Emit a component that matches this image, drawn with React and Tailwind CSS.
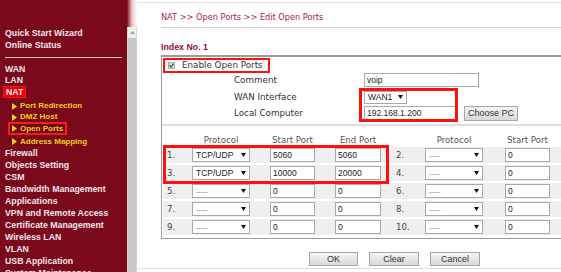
import React from "react";

const Tri = () => (
  <svg width="5" height="7" viewBox="0 0 5 7" className="shrink-0">
    <polygon points="0,0 5,3.5 0,7" fill="#f2cf1a" />
  </svg>
);

function Sidebar() {
  const main = "shrink-0 whitespace-nowrap pl-[5px] flex items-center text-[#f1e4ee] font-bold text-[8.75px]";
  const sub = "shrink-0 whitespace-nowrap pl-[12px] flex items-center gap-[3px] text-[#f2cf1a] font-bold text-[8px]";
  return (
    <div className="w-[137px] shrink-0 flex h-full overflow-hidden" style={{ fontFamily: '"Liberation Sans", Arial, sans-serif' }}>
      <div className="w-[127px] bg-[#7a0a1b] flex flex-col pt-[27px] leading-none overflow-hidden">
        <div className={main + " h-[12px]"}>Quick Start Wizard</div>
        <div className={main + " h-[12px]"}>Online Status</div>
        <div className="shrink-0 mx-[5px] mt-[6px] h-[1px] bg-[#dcc2cc]" />
        <div className="shrink-0 h-[5px]" />
        <div className={main + " h-[12px]"}>WAN</div>
        <div className={main + " h-[11px]"}>LAN</div>
        <div className="shrink-0 pl-[3px] h-[12px] flex">
          <div className="h-[12px] px-[2px] bg-[#e80000] border border-[#ff1010] flex items-center text-[#f7eef3] font-bold text-[8.75px]">NAT</div>
        </div>
        <div className={sub + " h-[14px] pt-[2px]"}><Tri />Port Redirection</div>
        <div className={sub + " h-[10px]"}><Tri />DMZ Host</div>
        <div className="shrink-0 pl-[8px] h-[13px] flex">
          <div className="whitespace-nowrap h-[13px] border-2 border-[#ff1a1a] bg-[#6e0716] flex items-center gap-[3px] pl-[2px] pr-[2px] text-[#f2cf1a] font-bold text-[8px]"><Tri />Open Ports</div>
        </div>
        <div className={sub + " h-[13px]"}><Tri />Address Mapping</div>
        <div className={main + " h-[11px]"}>Firewall</div>
        <div className={main + " h-[12px]"}>Objects Setting</div>
        <div className={main + " h-[12px]"}>CSM</div>
        <div className={main + " h-[12px]"}>Bandwidth Management</div>
        <div className={main + " h-[12px]"}>Applications</div>
        <div className={main + " h-[12px]"}>VPN and Remote Access</div>
        <div className={main + " h-[12px]"}>Certificate Management</div>
        <div className={main + " h-[12px]"}>Wireless LAN</div>
        <div className={main + " h-[12px]"}>VLAN</div>
        <div className={main + " h-[12px]"}>USB Application</div>
        <div className={main + " h-[12px]"}>System Maintenance</div>
      </div>
      <div className="w-[10px] flex flex-col">
        <div className="shrink-0 h-[27px] bg-gradient-to-r from-[#7a0a1b] via-[#e9c4cc] to-white" />
        <div className="shrink-0 h-[11px] bg-[#efefef] border-x border-[#d8d8d8] flex items-center justify-center">
          <svg width="5" height="3" viewBox="0 0 5 3"><polygon points="0,3 2.5,0 5,3" fill="#a0a0a0" /></svg>
        </div>
        <div className="flex-1 bg-[#c6c6c6] border-x border-[#d4d4d4]" />
      </div>
    </div>
  );
}

const lbl = { fontFamily: '"DejaVu Sans", Verdana, sans-serif' };
const inp = { fontFamily: '"Liberation Sans", Arial, sans-serif' };

function Input({ w, v, h = "h-[14px]" }) {
  return (
    <div className={`${w} ${h} bg-white border border-[#a9a9a9] flex items-center pl-[2px] text-[8.5px] text-[#222] leading-none`} style={inp}>
      {v}
    </div>
  );
}

function Select({ w, v, h = "h-[14px]" }) {
  const dash = v === "-----";
  return (
    <div className={`${w} ${h} bg-white border border-[#a9a9a9] flex items-center justify-between pl-[3px] pr-[3px] text-[8.5px] leading-none`} style={inp}>
      <span className={dash ? "text-[#777] text-[7px]" : "text-[#222]"}>{v}</span>
      <svg width="5" height="4" viewBox="0 0 5 4"><polygon points="0,0 5,0 2.5,4" fill="#111" /></svg>
    </div>
  );
}

function Btn({ children, w, h = "h-[14px]" }) {
  return (
    <div className={`${w} ${h} border border-[#a6a6a6] bg-gradient-to-b from-[#f4f4f4] to-[#d9d9d9] flex items-center justify-center text-[9px] text-[#333] leading-none`} style={inp}>
      {children}
    </div>
  );
}

const rows = [
  ["1.", "TCP/UDP", "5060", "5060", "2.", "-----", "0"],
  ["3.", "TCP/UDP", "10000", "20000", "4.", "-----", "0"],
  ["5.", "-----", "0", "0", "6.", "-----", "0"],
  ["7.", "-----", "0", "0", "8.", "-----", "0"],
  ["9.", "-----", "0", "0", "10.", "-----", "0"],
];

function Main() {
  return (
    <div className="flex-1 flex flex-col pl-[24px]">
      <div className="shrink-0 mt-[2px] h-[1px] bg-[#e2e2e2] -ml-[24px]" />
      <div className="shrink-0 h-[24px] flex items-center pt-[4px] text-[8.2px] text-[#a3234e] leading-none" style={lbl}>
        NAT &gt;&gt; Open Ports &gt;&gt; Edit Open Ports
      </div>
      <div className="shrink-0 h-[1px] bg-[#cfcfcf]" />
      <div className="shrink-0 h-[27px] flex items-end pb-[2px] text-[8.8px] font-bold text-[#8e1235] leading-[11px]" style={inp}>
        Index No. 1
      </div>
      <div className="shrink-0 w-[440px] border-t-2 border-l border-b border-[#9c9c9c] flex flex-col">
        {/* top section */}
        <div className="relative flex flex-col">
          <div className="mt-[1px] ml-[1px] w-[107px] h-[15px] border-2 border-[#ff1010] flex items-center pl-[3px] gap-[7px]">
            <div className="w-[7px] h-[7px] bg-[#d8d8d8] border border-[#a8a8a8] flex items-center justify-center">
              <svg width="5" height="5" viewBox="0 0 5 5"><polyline points="0.5,2.5 2,4 4.5,0.8" fill="none" stroke="#444" strokeWidth="1.1" /></svg>
            </div>
            <span className="text-[8.75px] text-[#333] leading-none" style={lbl}>Enable Open Ports</span>
          </div>
          <div className="h-[16px] flex items-start">
            <div className="ml-[72px] w-[130px] h-[14px] flex items-center text-[8.75px] text-[#333] leading-none" style={lbl}>Comment</div>
            <Input w="w-[115px]" v="voip" />
          </div>
          <div className="h-[16px] flex items-center">
            <div className="ml-[72px] w-[130px] text-[8.75px] text-[#333] leading-none" style={lbl}>WAN Interface</div>
            <Select w="w-[43px]" v="WAN1" h="h-[13px]" />
          </div>
          <div className="h-[16px] flex items-center">
            <div className="ml-[72px] w-[130px] text-[8.75px] text-[#333] leading-none" style={lbl}>Local Computer</div>
            <Input w="w-[92px]" v="192.168.1.200" />
            <div className="ml-[8px]"><Btn w="w-[54px]" h="h-[15px]">Choose PC</Btn></div>
          </div>
          <div className="mt-[3px] h-[2px] bg-[#dedede]" />
          <div className="absolute left-[197px] top-[31px] w-[99px] h-[34px] border-[3px] border-[#ff0f0f]" />
        </div>
        {/* port table */}
        <div className="relative flex flex-col gap-[2px] pb-[3px] text-[8.6px]" style={lbl}>
          <div className="h-[19px] flex items-end leading-[10px] text-[#555]">
            <div className="w-[28px]" />
            <div className="ml-[2px] w-[58px] text-center">Protocol</div>
            <div className="ml-[20px] w-[45px] text-center whitespace-nowrap">Start Port</div>
            <div className="ml-[20px] w-[46px] text-center whitespace-nowrap">End Port</div>
            <div className="ml-[15px] w-[29px]" />
            <div className="w-[58px] text-center">Protocol</div>
            <div className="ml-[22px] w-[45px] text-center whitespace-nowrap">Start Port</div>
          </div>
          {rows.map((r, i) => (
            <div key={i} className="h-[16px] flex items-center bg-[#efefef] ml-[1px] leading-[11px]">
              <div className="w-[27px] pl-[4px] text-[#444]">{r[0]}</div>
              <div className="ml-[2px]"><Select w="w-[58px]" v={r[1]} /></div>
              <div className="ml-[20px]"><Input w="w-[45px]" v={r[2]} /></div>
              <div className="ml-[20px]"><Input w="w-[46px]" v={r[3]} /></div>
              <div className="ml-[15px] w-[29px] text-[#444]">{r[4]}</div>
              <Select w="w-[58px]" v={r[5]} />
              <div className="ml-[22px]"><Input w="w-[45px]" v={r[6]} /></div>
            </div>
          ))}
          <div className="absolute left-[1px] top-[19px] w-[226px] h-[39px] border-[3px] border-[#ff0f0f]" />
        </div>
      </div>
      <div className="shrink-0 mt-[13px] flex gap-[11px] pl-[148px]">
        <Btn w="w-[49px]">OK</Btn>
        <Btn w="w-[50px]">Clear</Btn>
        <Btn w="w-[50px]">Cancel</Btn>
      </div>
      <div className="shrink-0 mt-[2px] h-[1px] bg-[#dddddd] -ml-[24px]" />
    </div>
  );
}

export default function App() {
  return (
    <div className="w-[561px] h-[272px] overflow-hidden bg-white flex">
      <Sidebar />
      <Main />
    </div>
  );
}
